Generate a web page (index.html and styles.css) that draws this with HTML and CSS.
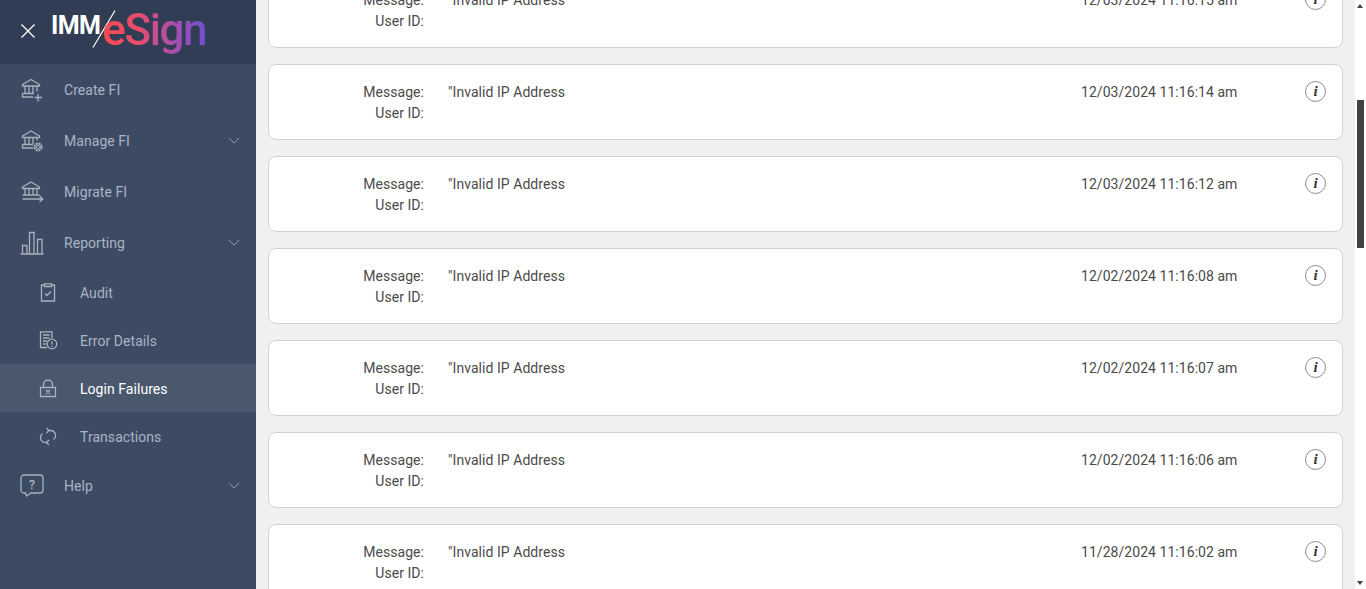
FILE: index.html
```html
<!DOCTYPE html>
<html lang="en">
<head>
<meta charset="utf-8">
<title>Login Failures</title>
<link rel="stylesheet" href="styles.css">
</head>
<body>
<div class="app">
  <aside class="sidebar">
    <header class="brand">
      <svg class="close" width="16" height="16" viewBox="0 0 16 16"><path d="M1.500 1.500l13 13M14.500 1.500l-13 13" stroke="#fff" stroke-width="1.300" fill="none"/></svg>
      <div class="logo">
        <span class="imm">IMM</span>
        <svg class="slash" width="24" height="38" viewBox="0 0 24 38"><path d="M23 .5L1 37.500" stroke="#fff" stroke-width="1.200"/></svg>
        <span class="esign">eSign</span>
      </div>
    </header>
    <nav class="nav">
      <a class="item">
        <svg class="ico" width="26" height="26" viewBox="0 0 26 26" fill="none" stroke="#a9b1bd" stroke-width="1.300"><path d="M2.500 7.500L11 2.500l8.500 5v1.500h-17zM5 9.500V16M9 9.500V16M13 9.500V16M17 9.500v5M2.500 16.500h11.500M2.500 16.500V20h10.500M14.500 20.500h7.500M18 17v7.500"/></svg>
        <span>Create FI</span>
      </a>
      <a class="item">
        <svg class="ico" width="26" height="26" viewBox="0 0 26 26" fill="none" stroke="#a9b1bd" stroke-width="1.300"><path d="M2.500 8L11 3l8.500 5v1.500h-17zM5 9.500V16M9 9.500V16M13 9.500V16M17 9.500v3M2.500 16.500H13M2.500 16.500V20H13"/><circle cx="18" cy="19" r="3.500" stroke-width="2.200" stroke-dasharray="2 .75"/><circle cx="18" cy="19" r="1.600" stroke-width="1"/></svg>
        <span>Manage FI</span>
        <svg class="chev" width="12" height="7" viewBox="0 0 12 7"><path d="M1 1l5 5 5-5" stroke="#8f98a6" fill="none"/></svg>
      </a>
      <a class="item">
        <svg class="ico" width="26" height="26" viewBox="0 0 26 26" fill="none" stroke="#a9b1bd" stroke-width="1.300"><path d="M2.500 8L11 3l8.500 5v1.500h-17zM5 9.500V15.500M9 9.500V15.500M13 9.500V15.500M17 9.500V15.500M2.500 16h17M2.500 20h20M19.500 17l3.300 3-3.300 3"/></svg>
        <span>Migrate FI</span>
      </a>
      <a class="item">
        <svg class="ico" width="26" height="26" viewBox="0 0 26 26" fill="none" stroke="#a9b1bd" stroke-width="1.300"><path d="M.5 24h23M2.500 24v-8.500h4.500V24M9.500 24V2.500H14V24M17.500 24V9.500H22V24"/></svg>
        <span>Reporting</span>
        <svg class="chev" width="12" height="7" viewBox="0 0 12 7"><path d="M1 1l5 5 5-5" stroke="#8f98a6" fill="none"/></svg>
      </a>
      <a class="item sub">
        <svg class="ico" width="20" height="20" viewBox="0 0 20 20" fill="none" stroke="#a9b1bd" stroke-width="1.300"><path d="M5.500 2H2.500v16h13V2h-3M5.500 .8h7V3.500h-7zM6 10.500l2 2 4-4"/></svg>
        <span>Audit</span>
      </a>
      <a class="item sub">
        <svg class="ico" width="20" height="20" viewBox="0 0 20 20" fill="none" stroke="#a9b1bd" stroke-width="1.300"><path d="M8 16.500H1.500V.8h11.500V7M4 4h6.500M4 7h6.500M4 10h4M4 13h3"/><circle cx="13" cy="13" r="4.800"/><path d="M13 10.200v3.300M13 14.700v1.200"/></svg>
        <span>Error Details</span>
      </a>
      <a class="item sub active">
        <svg class="ico" width="20" height="20" viewBox="0 0 20 20" fill="none" stroke="#a9b1bd" stroke-width="1.300"><path d="M1.500 8.500h15v9h-15zM4.500 8.500V5.500a4.500 4.500 0 0 1 9 0v3M7 11l4 4M11 11l-4 4"/></svg>
        <span>Login Failures</span>
      </a>
      <a class="item sub">
        <svg class="ico" width="20" height="20" viewBox="0 0 20 20" fill="none" stroke="#a9b1bd" stroke-width="1.300"><path d="M8 15.500H6.500A5 5 0 0 1 3.500 6.500M7.500 1l2.500 2.500-2.500 2.500M10 3.500h1.500a5 5 0 0 1 3 9M10 18l-2.500-2.500L10 13"/></svg>
        <span>Transactions</span>
      </a>
      <a class="item">
        <svg class="ico" width="26" height="26" viewBox="0 0 26 26" fill="none" stroke="#a9b1bd" stroke-width="1.300"><path d="M4 2h16a3 3 0 0 1 3 3v12a3 3 0 0 1-3 3H11l-4.500 3-1-3H4a3 3 0 0 1-3-3V5a3 3 0 0 1 3-3z"/><text x="12" y="15.500" class="q">?</text></svg>
        <span>Help</span>
        <svg class="chev" width="12" height="7" viewBox="0 0 12 7"><path d="M1 1l5 5 5-5" stroke="#8f98a6" fill="none"/></svg>
      </a>
    </nav>
  </aside>
  <main class="main">
    <div class="list">
      <section class="card"><div class="labels"><div>Message:</div><div>User ID:</div></div><div class="msg">"Invalid IP Address</div><div class="date">12/03/2024 11:16:15 am</div><span class="info">i</span></section>
      <section class="card"><div class="labels"><div>Message:</div><div>User ID:</div></div><div class="msg">"Invalid IP Address</div><div class="date">12/03/2024 11:16:14 am</div><span class="info">i</span></section>
      <section class="card"><div class="labels"><div>Message:</div><div>User ID:</div></div><div class="msg">"Invalid IP Address</div><div class="date">12/03/2024 11:16:12 am</div><span class="info">i</span></section>
      <section class="card"><div class="labels"><div>Message:</div><div>User ID:</div></div><div class="msg">"Invalid IP Address</div><div class="date">12/02/2024 11:16:08 am</div><span class="info">i</span></section>
      <section class="card"><div class="labels"><div>Message:</div><div>User ID:</div></div><div class="msg">"Invalid IP Address</div><div class="date">12/02/2024 11:16:07 am</div><span class="info">i</span></section>
      <section class="card"><div class="labels"><div>Message:</div><div>User ID:</div></div><div class="msg">"Invalid IP Address</div><div class="date">12/02/2024 11:16:06 am</div><span class="info">i</span></section>
      <section class="card"><div class="labels"><div>Message:</div><div>User ID:</div></div><div class="msg">"Invalid IP Address</div><div class="date">11/28/2024 11:16:02 am</div><span class="info">i</span></section>
    </div>
  </main>
  <div class="scrollbar">
    <span class="arrow up"></span>
    <span class="thumb"></span>
    <span class="arrow down"></span>
  </div>
</div>
</body>
</html>
```
FILE: styles.css
```css
* { box-sizing: border-box; }
html, body { margin: 0; height: 100%; overflow: hidden; }
body { font-family: Roboto, "Liberation Sans", sans-serif; font-size: 14px; letter-spacing: .05px; color: #4a4a4a; background: #f0f0f0; }
.app { display: flex; height: 589px; }

.sidebar { width: 256px; flex: none; background: #3c4b63; display: flex; flex-direction: column; }
.brand { height: 64px; background: #313d54; display: flex; align-items: center; padding-left: 20px; gap: 15px; flex: none; }
.close { flex: none; margin-top: -2px; }
.logo { display: flex; align-items: center; height: 64px; }
.imm { color: #fff; font-weight: 700; font-size: 25px; letter-spacing: -.6px; margin-top: -14px; }
.slash { margin-left: -8px; margin-right: -14px; margin-top: -7px; flex: none; }
.esign { font-size: 44px; font-weight: 500; letter-spacing: -1.400px; margin-top: -4px; background: linear-gradient(90deg, #fb4a50 0%, #e84d6c 35%, #a84fae 70%, #6f4fd0 100%); -webkit-background-clip: text; background-clip: text; color: transparent; }

.nav { display: flex; flex-direction: column; }
.item { display: flex; align-items: center; height: 51px; padding-left: 20px; color: #a9b4c4; font-size: 14px; }
.item > span { flex: 1; margin-left: 18px; }
.item .ico { flex: none; }
.chev { flex: none; margin-right: 16px; }
.sub { height: 48px; padding-left: 39px; padding-top: 2px; }
.sub > span { margin-left: 21px; }
.active { background: #4a586e; color: #fff; }
.q { font: 500 13px Roboto, sans-serif; fill: #a9b1bd; stroke: none; text-anchor: middle; }

.main { flex: 1; min-width: 0; overflow: hidden; padding: 0 12px; }
.list { display: flex; flex-direction: column; gap: 16px; margin-top: -28px; }
.card { height: 76px; flex: none; background: #fff; border: 1px solid #d2d2d2; border-radius: 8px; display: flex; align-items: flex-start; padding-top: 17px; line-height: 21px; }
.labels { width: 155px; text-align: right; flex: none; }
.msg { margin-left: 24px; width: 633px; flex: none; }
.date { width: 224px; flex: none; }
.info { width: 21px; height: 21px; margin-top: -1px; border: 1px solid #8a8a8a; border-radius: 50%; flex: none; display: flex; align-items: center; justify-content: center; font: italic 700 15px "Liberation Serif", serif; color: #333; line-height: 1; }

.scrollbar { width: 11px; flex: none; background: #fff; display: flex; flex-direction: column; align-items: center; position: relative; }
.arrow { width: 0; height: 0; border-left: 3.500px solid transparent; border-right: 3.500px solid transparent; position: absolute; left: 2px; }
.up { top: 4px; border-bottom: 4px solid #404040; }
.down { bottom: 4px; border-top: 4px solid #404040; }
.thumb { width: 7px; height: 148px; background: #424242; margin-top: 100px; }
```
